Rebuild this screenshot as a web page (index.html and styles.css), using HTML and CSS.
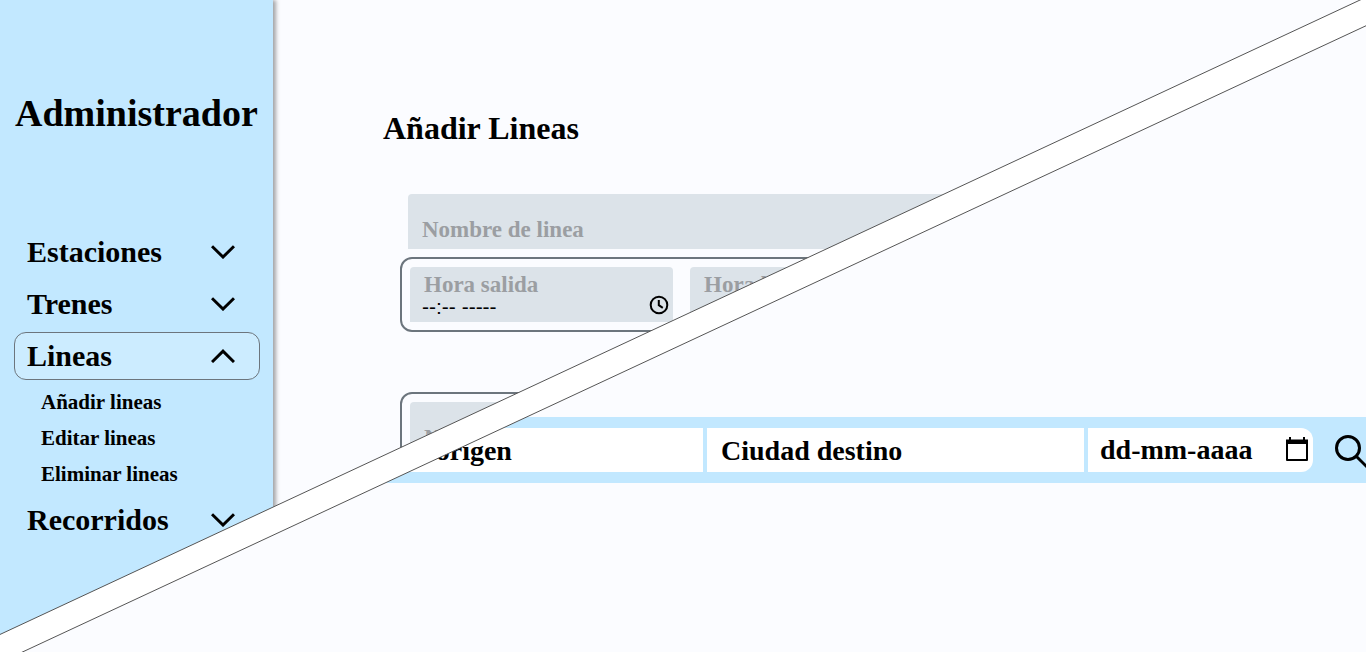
FILE: index.html
```html
<!DOCTYPE html>
<html lang="es">
<head>
<meta charset="utf-8">
<meta name="viewport" content="width=device-width, initial-scale=1">
<title>Administrador</title>
<link rel="stylesheet" href="styles.css">
</head>
<body>
<div class="stage">
  <section class="admin">
    <aside class="sidebar">
      <h1 class="sidebar-title">Administrador</h1>
      <nav class="menu">
        <button class="menu-item" type="button">Estaciones
          <svg class="chevron" viewBox="0 0 24 14"><path d="M1 1.2 12 12 23 1.2"/></svg>
        </button>
        <button class="menu-item" type="button">Trenes
          <svg class="chevron" viewBox="0 0 24 14"><path d="M1 1.2 12 12 23 1.2"/></svg>
        </button>
        <button class="menu-item active" type="button" aria-expanded="true">Lineas
          <svg class="chevron" viewBox="0 0 24 14"><path d="M1 13 12 2.200 23 13"/></svg>
        </button>
        <div class="submenu">
          <a class="submenu-link" href="#">Añadir lineas</a>
          <a class="submenu-link" href="#">Editar lineas</a>
          <a class="submenu-link" href="#">Eliminar lineas</a>
        </div>
        <button class="menu-item" type="button">Recorridos
          <svg class="chevron" viewBox="0 0 24 14"><path d="M1 1.2 12 12 23 1.2"/></svg>
        </button>
      </nav>
    </aside>
    <main class="content">
      <h2 class="content-title">Añadir Lineas</h2>
      <form class="form">
        <input class="field name-field" type="text" placeholder="Nombre de linea" aria-label="Nombre de linea">
        <div class="group times">
          <div class="field time-field">
            <label class="field-label" for="salida">Hora salida</label>
            <div class="time-row">
              <input class="time-input" id="salida" type="text" value="--:-- -----">
              <svg class="clock" viewBox="0 0 20 20"><circle cx="10" cy="10" r="8.3"/><path d="M9.8 5v5.2l4 2.6"/></svg>
            </div>
          </div>
          <div class="field time-field">
            <label class="field-label" for="llegada">Hora llegada</label>
            <div class="time-row">
              <input class="time-input" id="llegada" type="text">
            </div>
          </div>
        </div>
        <div class="group">
          <input class="field" type="text" placeholder="Nombre" aria-label="Nombre">
        </div>
      </form>
    </main>
  </section>

  <section class="finder">
    <form class="search-bar">
      <input class="search-input" type="text" placeholder="Ciudad origen" aria-label="Ciudad origen">
      <input class="search-input" type="text" placeholder="Ciudad destino" aria-label="Ciudad destino">
      <div class="date-box">
        <input class="date-input" type="text" placeholder="dd-mm-aaaa" aria-label="Fecha">
        <svg class="calendar" viewBox="0 0 22 26"><path d="M1 4h20v19H1z" fill="none" stroke="#000" stroke-width="2" stroke-linejoin="round"/><path d="M0 2.500h22V7H0zM3 0h2v3H3zM17 0h2v3h-2z"/></svg>
      </div>
      <button class="search-button" type="submit" aria-label="Buscar">
        <svg class="lens" viewBox="0 0 36 36"><circle cx="13" cy="13" r="11.500"/><path d="M21 21 34 34"/></svg>
      </button>
    </form>
  </section>

  <svg class="divider" viewBox="0 0 1366 652" preserveAspectRatio="none" aria-hidden="true">
    <path class="divider-band" d="M-14 641 1374-6.500 1388 15.500-14 669z"/>
  </svg>
</div>
</body>
</html>
```

FILE: styles.css
```css
* {
  box-sizing: border-box;
}

body {
  margin: 0;
  background: #fbfcff;
  color: #000;
  font-family: "Liberation Serif", "Times New Roman", serif;
  font-weight: 700;
}

input,
button {
  margin: 0;
  border: 0;
  border-radius: 0;
  outline: 0;
  background: none;
  color: inherit;
  font: inherit;
}

.stage {
  position: relative;
  display: grid;
  min-height: 100vh;
  overflow: hidden;
}

.admin,
.finder {
  grid-area: 1 / 1;
  min-width: 0;
}

/* Administration panel */
.admin {
  display: flex;
}

.sidebar {
  flex: none;
  width: 273px;
  padding: 91px 13px 0 14px;
  background: #c2e8ff;
  box-shadow: 3px 0 4px rgba(0, 0, 0, 0.35);
}

.sidebar-title {
  margin: 0 0 93px 1px;
  font-size: 38px;
  line-height: 44px;
}

.menu {
  display: flex;
  flex-direction: column;
  gap: 4px;
}

.menu-item {
  display: flex;
  align-items: center;
  justify-content: space-between;
  height: 48px;
  padding: 0 24px 0 12px;
  border: 1px solid transparent;
  border-radius: 12px;
  font-size: 30px;
}

.menu-item.active {
  border-color: #6c757d;
  background: #ccecff;
}

.chevron {
  width: 24px;
  height: 14px;
  fill: none;
  stroke: #000;
  stroke-width: 3px;
}

.submenu {
  display: flex;
  flex-direction: column;
  padding-left: 27px;
}

.submenu-link {
  color: inherit;
  font-size: 21px;
  line-height: 36px;
  text-decoration: none;
}

.content {
  flex: 1;
  padding: 110px 110px 0;
}

.content-title {
  margin: 0 0 48px;
  font-size: 32px;
  line-height: 36px;
}

.form {
  max-width: 580px;
  padding-left: 17px;
}

.field {
  display: block;
  width: 100%;
  height: 55px;
  padding: 17px 14px 0;
  border-radius: 4px 4px 0 0;
  background: #dce3e9;
  font-size: 23px;
}

.field::placeholder {
  color: #9b9ea2;
  opacity: 1;
}

.name-field {
  width: auto;
  min-width: calc(100% - 8px);
  margin: 0 0 8px 8px;
}

.group {
  margin-bottom: 60px;
  padding: 8px;
  border: 2px solid #6c757d;
  border-radius: 12px;
}

.times {
  display: grid;
  grid-template-columns: 1fr 1fr;
  gap: 17px;
}

.time-field {
  padding: 6px 4px 0 14px;
}

.field-label {
  display: block;
  color: #9b9ea2;
  line-height: 24px;
}

.time-row {
  display: flex;
  align-items: center;
  justify-content: space-between;
  height: 16px;
  margin-left: -2px;
}

.time-input {
  min-width: 0;
  width: 160px;
  padding: 4px 0 0;
  font-family: "Liberation Sans", Arial, sans-serif;
  font-size: 21px;
  font-weight: 400;
}

.clock {
  width: 20px;
  height: 20px;
  fill: none;
  stroke: #000;
  stroke-width: 2px;
}

/* Trip finder panel, visible below the diagonal */
.finder {
  padding: 417px 0 0 315px;
  background: #fbfcff;
  clip-path: polygon(100% 3%, 100% 100%, 1% 100%);
}

.search-bar {
  display: flex;
  align-items: center;
  gap: 4px;
  padding: 11px 0 11px 11px;
  background: #c2e8ff;
  font-size: 28px;
}

.search-input {
  flex: 1;
  min-width: 0;
  height: 44px;
  padding: 2px 14px 0;
  background: #fff;
}

.search-input::placeholder,
.date-input::placeholder {
  color: #000;
  opacity: 1;
}

.date-box {
  display: flex;
  align-items: center;
  justify-content: space-between;
  width: 225px;
  height: 44px;
  padding: 0 5px 0 12px;
  border-radius: 0 12px 12px 0;
  background: #fff;
}

.date-input {
  width: 170px;
  padding: 0;
}

.calendar {
  width: 22px;
  height: 26px;
}

.search-button {
  width: 49px;
  height: 42px;
  padding: 6px 0 0 18px;
}

.lens {
  display: block;
  width: 36px;
  height: 36px;
  fill: none;
  stroke: #000;
  stroke-width: 3px;
}

.divider {
  position: absolute;
  inset: 0;
  width: 100%;
  height: 100%;
  pointer-events: none;
}

.divider-band {
  fill: #fff;
  stroke: #555;
  stroke-width: 1px;
}
```
